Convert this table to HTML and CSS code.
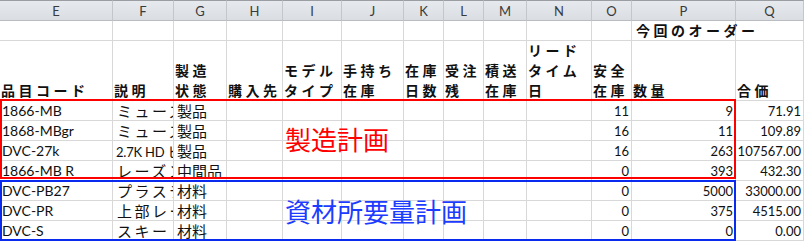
FILE: index.html
```html
<!DOCTYPE html>
<html lang="ja">
<head>
<meta charset="utf-8">
<link rel="stylesheet" href="styles.css">
</head>
<body>
<div class="sheet">
  <div class="grid">
    <div class="ch">E</div><div class="ch">F</div><div class="ch">G</div><div class="ch">H</div><div class="ch">I</div><div class="ch">J</div><div class="ch">K</div><div class="ch">L</div><div class="ch">M</div><div class="ch">N</div><div class="ch">O</div><div class="ch">P</div><div class="ch">Q</div>

    <div class="c"></div><div class="c"></div><div class="c"></div><div class="c"></div><div class="c"></div><div class="c"></div><div class="c"></div><div class="c"></div><div class="c"></div><div class="c"></div><div class="c"></div><div class="c h over">今回のオーダー</div><div class="c"></div>

    <div class="c h">品目コード</div><div class="c h">説明</div><div class="c h">製造<br>状態</div><div class="c h">購入先</div><div class="c h">モデル<br>タイプ</div><div class="c h">手持ち<br>在庫</div><div class="c h">在庫<br>日数</div><div class="c h">受注<br>残</div><div class="c h">積送<br>在庫</div><div class="c h">リード<br>タイム<br>日</div><div class="c h">安全<br>在庫</div><div class="c h">数量</div><div class="c h">合価</div>

    <div class="c t">1866-MB</div><div class="c j k">ミューズ</div><div class="c j">製品</div><div class="c"></div><div class="c"></div><div class="c"></div><div class="c"></div><div class="c"></div><div class="c"></div><div class="c"></div><div class="c n">11</div><div class="c n">9</div><div class="c n">71.91</div>

    <div class="c t">1868-MBgr</div><div class="c j k">ミューズ</div><div class="c j">製品</div><div class="c"></div><div class="c"></div><div class="c"></div><div class="c"></div><div class="c"></div><div class="c"></div><div class="c"></div><div class="c n">16</div><div class="c n">11</div><div class="c n">109.89</div>

    <div class="c t">DVC-27k</div><div class="c t mix">2.7K HD <span class="jk">ビデオ</span></div><div class="c j">製品</div><div class="c"></div><div class="c"></div><div class="c"></div><div class="c"></div><div class="c"></div><div class="c"></div><div class="c"></div><div class="c n">16</div><div class="c n">263</div><div class="c n">107567.00</div>

    <div class="c t">1866-MB R</div><div class="c j k">レーズン</div><div class="c j">中間品</div><div class="c"></div><div class="c"></div><div class="c"></div><div class="c"></div><div class="c"></div><div class="c"></div><div class="c"></div><div class="c n">0</div><div class="c n">393</div><div class="c n">432.30</div>

    <div class="c t">DVC-PB27</div><div class="c j k">プラスチック</div><div class="c j">材料</div><div class="c"></div><div class="c"></div><div class="c"></div><div class="c"></div><div class="c"></div><div class="c"></div><div class="c"></div><div class="c n">0</div><div class="c n">5000</div><div class="c n">33000.00</div>

    <div class="c t">DVC-PR</div><div class="c j k">上部レール</div><div class="c j">材料</div><div class="c"></div><div class="c"></div><div class="c"></div><div class="c"></div><div class="c"></div><div class="c"></div><div class="c"></div><div class="c n">0</div><div class="c n">375</div><div class="c n">4515.00</div>

    <div class="c t">DVC-S</div><div class="c j k">スキー</div><div class="c j">材料</div><div class="c"></div><div class="c"></div><div class="c"></div><div class="c"></div><div class="c"></div><div class="c"></div><div class="c"></div><div class="c n">0</div><div class="c n">0</div><div class="c n">0.00</div>
  </div>

  <div class="box box-red"><span class="label">製造計画</span></div>
  <div class="box box-blue"><span class="label">資材所要量計画</span></div>
</div>
</body>
</html>
```

FILE: styles.css
```css
html, body {
  margin: 0;
  padding: 0;
  background: #ffffff;
}

.sheet {
  position: relative;
  width: 804px;
  height: 241px;
  overflow: hidden;
}

.grid {
  display: grid;
  grid-template-columns: 113px 61px 53px 56px 59px 62px 40px 40px 43px 65px 40px 104px 68px;
  grid-template-rows: 21px 20px 60px repeat(7, 20px);
}

.ch {
  box-sizing: border-box;
  background: linear-gradient(#e6e9ed, #dadee3);
  border-top: 1px solid #9a9da1;
  border-bottom: 1px solid #b9bdc2;
  border-right: 1px solid #c3c7cc;
  font-family: "Lato", "Liberation Sans", sans-serif;
  font-size: 13px;
  color: #3a3a3a;
  display: flex;
  align-items: center;
  justify-content: center;
  padding-top: 1px;
}

.c {
  box-sizing: border-box;
  border-right: 1px solid #d8d8d8;
  border-bottom: 1px solid #d8d8d8;
  overflow: hidden;
  white-space: nowrap;
  color: #111;
}

.h {
  display: flex;
  flex-direction: column;
  justify-content: flex-end;
  font-family: "Noto Sans CJK JP", sans-serif;
  font-weight: 700;
  font-size: 14px;
  line-height: 20px;
  letter-spacing: 3.5px;
  padding-left: 1px;
}

.over {
  overflow: visible;
  position: relative;
  z-index: 1;
  padding-left: 4px;
}

.t {
  font-family: "Lato", "Liberation Sans", sans-serif;
  font-size: 14px;
  line-height: 20px;
  padding-left: 2px;
}

.t.mix {
  font-size: 13px;
  padding-left: 3px;
  letter-spacing: -0.2px;
}

.t .jk {
  font-family: "Noto Sans CJK JP", sans-serif;
  font-size: 14px;
}

.j {
  font-family: "Noto Sans CJK JP", sans-serif;
  font-size: 15px;
  line-height: 19px;
  padding-left: 3px;
}

.j.k {
  letter-spacing: 2.5px;
  padding-left: 4px;
}

.n {
  font-family: "Lato", "Liberation Sans", sans-serif;
  font-size: 13px;
  line-height: 20px;
  text-align: right;
  padding-right: 2px;
}

.box {
  position: absolute;
  left: 0;
  width: 736px;
  box-sizing: border-box;
  border: 2px solid;
  display: flex;
  align-items: center;
  padding-left: 283px;
}

.box-red {
  top: 99px;
  height: 80px;
  border-color: #ff0000;
  color: #ff0000;
}

.box-blue {
  top: 180px;
  height: 61px;
  border-color: #0a2af0;
  color: #1c3cff;
}

.label {
  font-family: "Noto Sans CJK JP", sans-serif;
  font-size: 26px;
  line-height: 30px;
}
```
